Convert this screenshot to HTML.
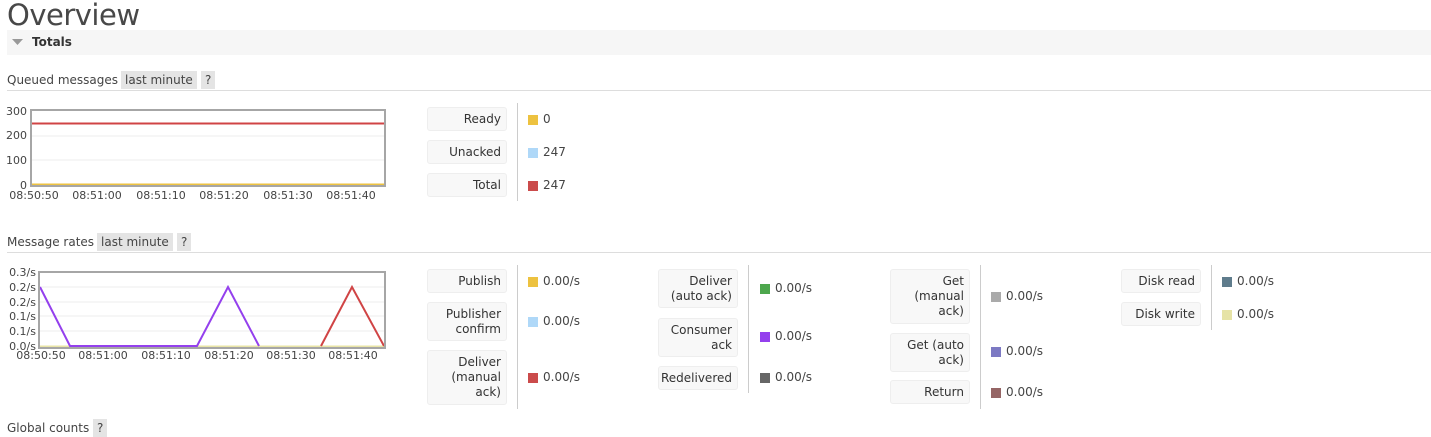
<!DOCTYPE html>
<html><head><meta charset="utf-8"><style>
*{margin:0;padding:0;box-sizing:border-box}
body{width:1431px;height:430px;overflow:hidden;background:#fff;font-family:"DejaVu Sans","Liberation Sans",sans-serif;font-size:12px;color:#333;position:relative}
.a{position:absolute;white-space:nowrap}
h1{position:absolute;left:7px;top:-2px;font-weight:normal;font-size:29px;color:#484848;font-family:"DejaVu Sans",sans-serif;letter-spacing:-0.5px}
.bar{position:absolute;left:7px;top:30px;width:1424px;height:25px;background:#f6f6f6}
.tag{position:absolute;background:#e4e4e4;height:18px;line-height:18px;padding:0 4px;font-size:12px;color:#444}
.hl{position:absolute;left:7px;width:1424px;height:1px;background:#ddd}
.lb{position:absolute;width:80px;background:#f8f8f8;border:1px solid #eee;border-radius:3px;text-align:right;padding:3px 5px 3px 3px;line-height:15px;font-size:12px;color:#333;display:flex;align-items:center;justify-content:flex-end}
.dv{position:absolute;width:1px;background:#ccc}
.sw{position:absolute;width:10px;height:10px}
.v{position:absolute;font-size:12px;color:#444}
</style></head><body>
<h1>Overview</h1>
<div class="bar"></div>
<svg class="a" style="left:12px;top:39px" width="12" height="8"><polygon points="0,0 11,0 5.5,6" fill="#999"/></svg>
<div class="a" style="left:32px;top:35px;font-weight:bold;font-size:12px;color:#333">Totals</div>

<div class="a" style="left:7px;top:73px;color:#444">Queued messages</div>
<div class="tag" style="left:121px;top:71px">last minute</div>
<div class="tag" style="left:201px;top:71px">?</div>
<div class="hl" style="top:90px"></div>

<svg class="a" style="left:0;top:100px" width="400" height="105">
<g stroke="#eee" stroke-width="1"><line x1="31" y1="36" x2="385" y2="36"/><line x1="31" y1="60" x2="385" y2="60"/></g>
<line x1="32" y1="23.5" x2="384" y2="23.5" stroke="#d04445" stroke-width="2"/>
<line x1="32" y1="84.5" x2="384" y2="84.5" stroke="#edc240" stroke-width="2"/>
<rect x="31" y="10" width="354" height="76" fill="none" stroke="#a6a6a6" stroke-width="2"/>
<g font-size="11" fill="#444" font-family="DejaVu Sans,sans-serif" text-anchor="end">
<text x="27" y="15">300</text><text x="27" y="39">200</text><text x="27" y="64">100</text><text x="27" y="89">0</text></g>
<g font-size="11" fill="#444" font-family="DejaVu Sans,sans-serif" text-anchor="middle">
<text x="34" y="99">08:50:50</text><text x="97" y="99">08:51:00</text><text x="161" y="99">08:51:10</text><text x="224" y="99">08:51:20</text><text x="288" y="99">08:51:30</text><text x="351" y="99">08:51:40</text></g>
</svg>

<div class="lb" style="left:427px;top:107px;height:24px">Ready</div>
<div class="lb" style="left:427px;top:140px;height:24px">Unacked</div>
<div class="lb" style="left:427px;top:173px;height:24px">Total</div>
<div class="dv" style="left:517px;top:103px;height:98px"></div>
<div class="sw" style="left:528px;top:115px;background:#edc240"></div><div class="v" style="left:543px;top:112px">0</div>
<div class="sw" style="left:528px;top:148px;background:#afd8f8"></div><div class="v" style="left:543px;top:145px">247</div>
<div class="sw" style="left:528px;top:181px;background:#cb4b4b"></div><div class="v" style="left:543px;top:178px">247</div>

<div class="a" style="left:7px;top:235px;color:#444">Message rates</div>
<div class="tag" style="left:97px;top:233px">last minute</div>
<div class="tag" style="left:177px;top:233px">?</div>
<div class="hl" style="top:252px"></div>

<svg class="a" style="left:0;top:262px" width="400" height="105">
<g stroke="#eee" stroke-width="1"><line x1="39" y1="25" x2="385" y2="25"/><line x1="39" y1="40" x2="385" y2="40"/><line x1="39" y1="54" x2="385" y2="54"/><line x1="39" y1="69" x2="385" y2="69"/></g>
<line x1="40" y1="84.5" x2="384" y2="84.5" stroke="#e8e4a6" stroke-width="2"/>
<polyline points="40,25 70,84 197,84 228,25 259,84" fill="none" stroke="#9440ed" stroke-width="2"/>
<polyline points="321,84 352,25 384,84" fill="none" stroke="#d04445" stroke-width="2"/>
<rect x="39" y="10" width="346" height="76" fill="none" stroke="#a6a6a6" stroke-width="2"/>
<g font-size="11" fill="#444" font-family="DejaVu Sans,sans-serif" text-anchor="end">
<text x="36" y="14">0.3/s</text><text x="36" y="29">0.2/s</text><text x="36" y="44">0.2/s</text><text x="36" y="58">0.1/s</text><text x="36" y="73">0.1/s</text><text x="36" y="88">0.0/s</text></g>
<g font-size="11" fill="#444" font-family="DejaVu Sans,sans-serif" text-anchor="middle">
<text x="41" y="97">08:50:50</text><text x="103" y="97">08:51:00</text><text x="166" y="97">08:51:10</text><text x="229" y="97">08:51:20</text><text x="291" y="97">08:51:30</text><text x="353" y="97">08:51:40</text></g>
</svg>

<div class="lb" style="left:427px;top:269px;height:24px">Publish</div>
<div class="lb" style="left:427px;top:302px;height:39px">Publisher<br>confirm</div>
<div class="lb" style="left:427px;top:350px;height:55px">Deliver<br>(manual<br>ack)</div>
<div class="dv" style="left:517px;top:265px;height:144px"></div>
<div class="sw" style="left:528px;top:277px;background:#edc240"></div><div class="v" style="left:543px;top:274px">0.00/s</div>
<div class="sw" style="left:528px;top:317px;background:#afd8f8"></div><div class="v" style="left:543px;top:314px">0.00/s</div>
<div class="sw" style="left:528px;top:373px;background:#cb4b4b"></div><div class="v" style="left:543px;top:370px">0.00/s</div>

<div class="lb" style="left:658px;top:269px;height:39px">Deliver<br>(auto ack)</div>
<div class="lb" style="left:658px;top:318px;height:39px">Consumer<br>ack</div>
<div class="lb" style="left:658px;top:366px;height:24px">Redelivered</div>
<div class="dv" style="left:748px;top:265px;height:128px"></div>
<div class="sw" style="left:760px;top:284px;background:#4da74d"></div><div class="v" style="left:775px;top:281px">0.00/s</div>
<div class="sw" style="left:760px;top:332px;background:#9440ed"></div><div class="v" style="left:775px;top:329px">0.00/s</div>
<div class="sw" style="left:760px;top:373px;background:#666"></div><div class="v" style="left:775px;top:370px">0.00/s</div>

<div class="lb" style="left:890px;top:269px;height:55px">Get<br>(manual<br>ack)</div>
<div class="lb" style="left:890px;top:333px;height:39px">Get (auto<br>ack)</div>
<div class="lb" style="left:890px;top:380px;height:24px">Return</div>
<div class="dv" style="left:980px;top:265px;height:144px"></div>
<div class="sw" style="left:991px;top:292px;background:#aaa"></div><div class="v" style="left:1006px;top:289px">0.00/s</div>
<div class="sw" style="left:991px;top:347px;background:#7c79c3"></div><div class="v" style="left:1006px;top:344px">0.00/s</div>
<div class="sw" style="left:991px;top:388px;background:#956565"></div><div class="v" style="left:1006px;top:385px">0.00/s</div>

<div class="lb" style="left:1121px;top:269px;height:24px">Disk read</div>
<div class="lb" style="left:1121px;top:302px;height:24px">Disk write</div>
<div class="dv" style="left:1211px;top:265px;height:65px"></div>
<div class="sw" style="left:1222px;top:277px;background:#5f7c8c"></div><div class="v" style="left:1237px;top:274px">0.00/s</div>
<div class="sw" style="left:1222px;top:310px;background:#e6e3a6"></div><div class="v" style="left:1237px;top:307px">0.00/s</div>

<div class="a" style="left:7px;top:421px;color:#444">Global counts</div>
<div class="tag" style="left:93px;top:419px">?</div>
</body></html>
